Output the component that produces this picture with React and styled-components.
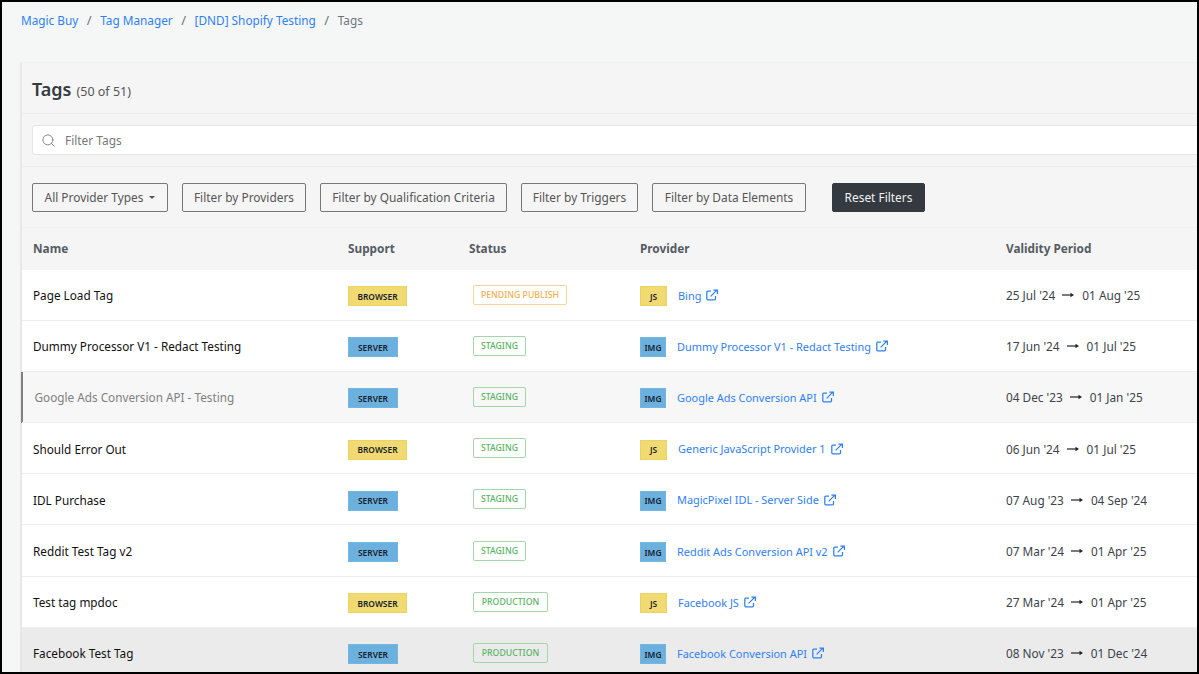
import React from "react";
import styled, { createGlobalStyle } from "styled-components";
import { Search } from "lucide-react";

const Global = createGlobalStyle`
  html, body { margin: 0; padding: 0; background: #000; }
  * { box-sizing: border-box; }
`;

const Frame = styled.div`
  width: 1199px;
  height: 674px;
  border: 2px solid #000;
  background: #f5f7f7;
  overflow: hidden;
  font-family: "Noto Sans", "Open Sans", sans-serif;
  font-size: 12px;
  color: #212529;
`;

const Breadcrumbs = styled.nav`
  display: flex;
  align-items: center;
  height: 36px;
  padding-left: 19px;
  font-size: 11.8px;
`;

const Crumb = styled.a`
  color: ${(p) => (p.$current ? "#6c757d" : "#2f80f5")};
`;

const Slash = styled.span`
  color: #6c757d;
  padding: 0 8.5px;
  font-size: 13px;
`;

const Card = styled.section`
  margin: 24px 0 0 18px;
  width: 1200px;
  background: #f5f5f5;
  border-left: 2px solid #e6e8e8;
  border-top: 1px solid #eff0f0;
`;

const CardHead = styled.header`
  display: flex;
  align-items: baseline;
  height: 51px;
  padding: 14px 0 0 10px;
  border-bottom: 1px solid #ececec;
`;

const Title = styled.h1`
  margin: 0;
  font-size: 18px;
  line-height: 24px;
  font-weight: 600;
  color: #343a40;
`;

const Count = styled.span`
  margin-left: 5px;
  font-size: 12.5px;
  color: #555;
`;

const SearchBar = styled.div`
  padding: 11px 0 11px 10px;
  border-bottom: 1px solid #ececec;
`;

const SearchBox = styled.div`
  display: flex;
  align-items: center;
  gap: 9px;
  height: 30px;
  padding-left: 8px;
  background: #fff;
  border: 1px solid #e6e6e6;
  border-radius: 3px;
  color: #777;
  font-size: 11.9px;
`;

const Filters = styled.div`
  display: flex;
  align-items: center;
  height: 61px;
  padding-left: 10px;
  gap: 14px;
  border-bottom: 1px solid #f0f0f0;
`;

const FilterButton = styled.button`
  display: inline-flex;
  align-items: center;
  justify-content: center;
  gap: 6px;
  height: 29px;
  width: ${(p) => p.$w}px;
  padding: 0;
  font: inherit;
  font-size: 11.9px;
  color: #555;
  background: transparent;
  border: 1px solid #777;
  border-radius: 2px;
`;

const ResetButton = styled(FilterButton)`
  margin-left: 12px;
  color: #f2f2f2;
  background: #343a40;
  border-color: #343a40;
`;

const Caret = styled.span`
  width: 0;
  height: 0;
  border-left: 3px solid transparent;
  border-right: 3px solid transparent;
  border-top: 3px solid #555;
`;

const Grid = styled.div`
  display: grid;
  grid-template-columns: 326px 121px 171px 366px 1fr;
  align-items: center;
`;

const HeadRow = styled(Grid)`
  height: 41.5px;
  padding-bottom: 2px;
  font-weight: 700;
  color: #555c63;
  font-size: 11.8px;
`;

const HeadCell = styled.div`
  padding-left: ${(p) => (p.$first ? "11px" : "0")};
`;

const Row = styled(Grid)`
  height: 51.2px;
  background: ${(p) => (p.$tone === "hover" ? "#ebebeb" : p.$tone === "muted" ? "#f7f7f7" : "#fff")};
  border-bottom: 1px solid #eeeeee;
  box-shadow: ${(p) => (p.$tone === "muted" ? "-1px 0 #808080, inset 1px 0 #808080" : "none")};
`;

const NameCell = styled.div`
  padding-left: ${(p) => (p.$muted ? "12.5px" : "11px")};
  color: ${(p) => (p.$muted ? "#808080" : "#111")};
  font-size: 11.75px;
  padding-top: 1px;
`;

const Chip = styled.span`
  display: inline-flex;
  align-items: center;
  justify-content: center;
  height: 20px;
  width: ${(p) => p.$w}px;
  margin-top: 3px;
  font-size: 8.4px;
  font-weight: 600;
  color: #16202a;
  background: ${(p) => (p.$kind === "yellow" ? "#f2da72" : "#6cb0de")};
  border: 1px solid ${(p) => (p.$kind === "yellow" ? "#ecd261" : "#74b5e1")};
`;

const Status = styled.span`
  display: inline-flex;
  align-items: center;
  justify-content: center;
  height: 20px;
  margin-left: 4px;
  width: ${(p) => p.$w}px;
  font-size: 8.7px;
  font-weight: 500;
  color: ${(p) => (p.$tone === "warn" ? "#efb04d" : "#58b462")};
  border: 1px solid ${(p) => (p.$tone === "warn" ? "#f5d39c" : "#a3d6a8")};
  border-radius: 2px;
  background: ${(p) => (p.$tone === "warn" ? "#fff" : "transparent")};
`;

const ProviderCell = styled.div`
  display: flex;
  align-items: center;
  gap: 11px;
`;

const ProviderLink = styled.a`
  display: inline-flex;
  align-items: center;
  gap: 5px;
  color: #2f80f5;
  font-size: 10.95px;
  padding-top: 1px;
`;

const DateCell = styled.div`
  display: flex;
  align-items: center;
  font-size: 11.8px;
  color: #3d4349;
  padding-top: 1px;
`;

const ArrowIcon = styled.svg`
  margin: 0 8px 0 7px;
`;

const LinkIcon = () => (
  <svg width="12" height="12" viewBox="0 0 12 12" fill="none" stroke="#2f80f5" strokeWidth="1.25">
    <path d="M9.5 7v2.8a1 1 0 0 1-1 1H1.8a1 1 0 0 1-1-1V3.2a1 1 0 0 1 1-1H5" />
    <path d="M4.6 7.4 10.6 1.4M7.4 1h4v4" />
  </svg>
);

const Arrow = () => (
  <ArrowIcon width="12" height="6" viewBox="0 0 12 6">
    <path d="M0 3h9" stroke="#222" strokeWidth="1.2" />
    <path d="M8.5 .8 12 3 8.5 5.2z" fill="#222" />
  </ArrowIcon>
);

const filters = [
  ["Filter by Providers", 124],
  ["Filter by Qualification Criteria", 187],
  ["Filter by Triggers", 117],
  ["Filter by Data Elements", 154],
];

const rows = [
  { name: "Page Load Tag", support: "BROWSER", status: "PENDING PUBLISH", provider: "Bing", from: "25 Jul '24", to: "01 Aug '25" },
  { name: "Dummy Processor V1 - Redact Testing", support: "SERVER", status: "STAGING", provider: "Dummy Processor V1 - Redact Testing", from: "17 Jun '24", to: "01 Jul '25" },
  { name: "Google Ads Conversion API - Testing", support: "SERVER", status: "STAGING", provider: "Google Ads Conversion API", from: "04 Dec '23", to: "01 Jan '25", tone: "muted" },
  { name: "Should Error Out", support: "BROWSER", status: "STAGING", provider: "Generic JavaScript Provider 1", from: "06 Jun '24", to: "01 Jul '25" },
  { name: "IDL Purchase", support: "SERVER", status: "STAGING", provider: "MagicPixel IDL - Server Side", from: "07 Aug '23", to: "04 Sep '24" },
  { name: "Reddit Test Tag v2", support: "SERVER", status: "STAGING", provider: "Reddit Ads Conversion API v2", from: "07 Mar '24", to: "01 Apr '25" },
  { name: "Test tag mpdoc", support: "BROWSER", status: "PRODUCTION", provider: "Facebook JS", from: "27 Mar '24", to: "01 Apr '25" },
  { name: "Facebook Test Tag", support: "SERVER", status: "PRODUCTION", provider: "Facebook Conversion API", from: "08 Nov '23", to: "01 Dec '24", tone: "hover" },
];

const statusWidth = { "PENDING PUBLISH": 94, STAGING: 53, PRODUCTION: 75 };

export default function App() {
  return (
    <Frame>
      <Global />
      <Breadcrumbs>
        <Crumb>Magic Buy</Crumb>
        <Slash>/</Slash>
        <Crumb>Tag Manager</Crumb>
        <Slash>/</Slash>
        <Crumb>[DND] Shopify Testing</Crumb>
        <Slash>/</Slash>
        <Crumb $current>Tags</Crumb>
      </Breadcrumbs>
      <Card>
        <CardHead>
          <Title>Tags</Title>
          <Count>(50 of 51)</Count>
        </CardHead>
        <SearchBar>
          <SearchBox>
            <Search size={15} color="#777" strokeWidth={1.4} />
            Filter Tags
          </SearchBox>
        </SearchBar>
        <Filters>
          <FilterButton $w={136}>
            All Provider Types <Caret />
          </FilterButton>
          {filters.map(([label, w]) => (
            <FilterButton key={label} $w={w}>{label}</FilterButton>
          ))}
          <ResetButton $w={93}>Reset Filters</ResetButton>
        </Filters>
        <HeadRow>
          <HeadCell $first>Name</HeadCell>
          <HeadCell>Support</HeadCell>
          <HeadCell>Status</HeadCell>
          <HeadCell>Provider</HeadCell>
          <HeadCell>Validity Period</HeadCell>
        </HeadRow>
        {rows.map((r) => {
          const yellow = r.support === "BROWSER";
          return (
            <Row key={r.name} $tone={r.tone}>
              <NameCell $muted={r.tone === "muted"}>{r.name}</NameCell>
              <div>
                <Chip $kind={yellow ? "yellow" : "blue"} $w={yellow ? 59 : 50}>{r.support}</Chip>
              </div>
              <div>
                <Status $w={statusWidth[r.status]} $tone={r.status === "PENDING PUBLISH" ? "warn" : "ok"}>{r.status}</Status>
              </div>
              <ProviderCell>
                <Chip $kind={yellow ? "yellow" : "blue"} $w={yellow ? 27 : 26}>{yellow ? "JS" : "IMG"}</Chip>
                <ProviderLink>
                  {r.provider}
                  <LinkIcon />
                </ProviderLink>
              </ProviderCell>
              <DateCell>
                {r.from}
                <Arrow />
                {r.to}
              </DateCell>
            </Row>
          );
        })}
      </Card>
    </Frame>
  );
}
